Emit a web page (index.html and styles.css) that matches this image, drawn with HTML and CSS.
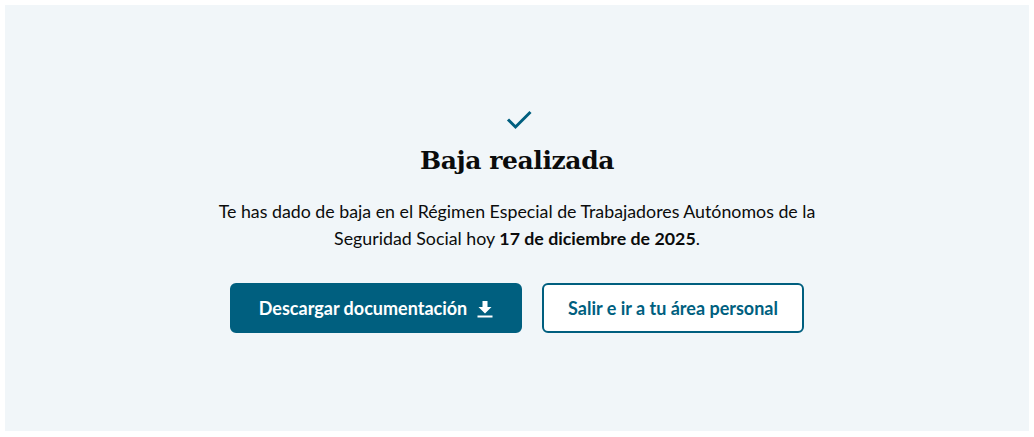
FILE: index.html
```html
<!DOCTYPE html>
<html lang="es">
<head>
<meta charset="utf-8">
<link rel="stylesheet" href="styles.css">
</head>
<body>
<main class="panel">
  <svg class="check" width="28" height="22" viewBox="0 0 28 22" aria-hidden="true">
    <path d="M3 11.5 L10.5 19 L25.5 4" fill="none" stroke="#005f7f" stroke-width="3"/>
  </svg>
  <h1 class="title">Baja realizada</h1>
  <p class="text">Te has dado de baja en el Régimen Especial de Trabajadores Autónomos de la Seguridad Social hoy <strong>17 de diciembre de 2025</strong>.</p>
  <div class="actions">
    <button class="btn btn-primary">Descargar documentación
      <svg class="dl" width="16" height="18" viewBox="0 0 16 18" aria-hidden="true">
        <path d="M5.5 1 H10.5 V7 H14.5 L8 13.5 L1.5 7 H5.5 Z" fill="#fff"/>
        <rect x="0.5" y="15.5" width="15" height="2" fill="#fff"/>
      </svg>
    </button>
    <button class="btn btn-secondary">Salir e ir a tu área personal</button>
  </div>
</main>
</body>
</html>
```

FILE: styles.css
```css
html, body { margin: 0; padding: 0; background: #ffffff; }
body { padding: 5px; font-family: Lato, "Noto Sans", sans-serif; color: #0b0c0c; }
.panel {
  background: #f1f6f9;
  height: 426px;
  box-sizing: border-box;
  display: flex;
  flex-direction: column;
  align-items: center;
  padding-top: 103px;
}
.check { display: block; margin-left: 4px; }
.title {
  font-family: "DejaVu Serif", "Liberation Serif", serif;
  font-weight: bold;
  font-size: 25px;
  line-height: 34px;
  margin: 14px 0 0;
  letter-spacing: -0.4px;
  color: #0b0c0c;
}
.text {
  width: 640px;
  text-align: center;
  font-size: 17.8px;
  line-height: 27px;
  margin: 20px 0 0;
}
.text strong { font-weight: bold; }
.actions { display: flex; gap: 20px; margin-top: 31px; }
.btn {
  font-family: Lato, "Noto Sans", sans-serif;
  font-weight: bold;
  font-size: 18px;
  height: 50px;
  border-radius: 6px;
  box-sizing: border-box;
  display: flex;
  align-items: center;
  justify-content: center;
  cursor: pointer;
}
.btn-primary {
  background: #005f7f;
  color: #ffffff;
  border: 2px solid #005f7f;
  width: 292px;
  gap: 10px;
}
.dl { display: block; margin-top: 1px; }
.btn-secondary {
  background: #ffffff;
  color: #005f7f;
  border: 2px solid #005f7f;
  width: 262px;
}
```
